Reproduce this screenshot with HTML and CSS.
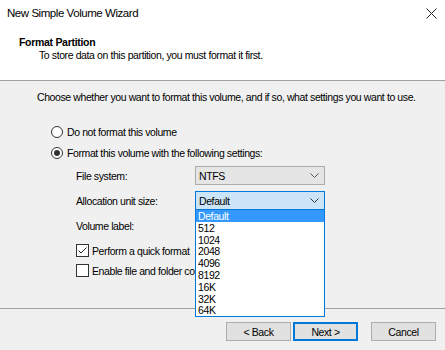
FILE: index.html
```html
<!DOCTYPE html>
<html lang="en">
<head>
  <meta charset="UTF-8" />
  <title>New Simple Volume Wizard</title>
  <link rel="stylesheet" href="styles.css">
</head>
<body>
  <div class="window">
    <div class="top">
      <div class="titlebar">
        <span class="title">New Simple Volume Wizard</span>
        <svg class="close" width="11" height="11" viewBox="0 0 11 11">
          <path d="M0.5 0.5 L10.5 10.5 M10.5 0.5 L0.5 10.5" stroke="#222" stroke-width="1" fill="none"/>
        </svg>
      </div>
      <div class="heading">
        <h1>Format Partition</h1>
        <p>To store data on this partition, you must format it first.</p>
      </div>
    </div>

    <div class="content">
      <p class="intro">Choose whether you want to format this volume, and if so, what settings you want to use.</p>

      <div class="option">
        <span class="radio"></span>
        <span>Do not format this volume</span>
      </div>
      <div class="option">
        <span class="radio checked"></span>
        <span>Format this volume with the following settings:</span>
      </div>

      <div class="settings">
        <div class="field">
          <span class="label">File system:</span>
          <div class="combo">
            <span>NTFS</span>
            <svg width="9" height="5" viewBox="0 0 9 5"><path d="M0.5 0.5 L4.5 4.5 L8.5 0.5" stroke="#555" fill="none"/></svg>
          </div>
        </div>
        <div class="field">
          <span class="label">Allocation unit size:</span>
          <div class="combo open">
            <span>Default</span>
            <svg width="9" height="5" viewBox="0 0 9 5"><path d="M0.5 0.5 L4.5 4.5 L8.5 0.5" stroke="#333" fill="none"/></svg>
            <ul class="dropdown">
              <li class="selected">Default</li>
              <li>512</li>
              <li>1024</li>
              <li>2048</li>
              <li>4096</li>
              <li>8192</li>
              <li>16K</li>
              <li>32K</li>
              <li>64K</li>
            </ul>
          </div>
        </div>
        <div class="field">
          <span class="label">Volume label:</span>
        </div>

        <div class="check-row">
          <span class="checkbox">
            <svg width="11" height="11" viewBox="0 0 11 11"><path d="M1.5 5.5 L4 8 L9.5 2.5" stroke="#222" fill="none"/></svg>
          </span>
          <span>Perform a quick format</span>
        </div>
        <div class="check-row">
          <span class="checkbox"></span>
          <span>Enable file and folder compression</span>
        </div>
      </div>
    </div>

    <div class="buttons">
      <button class="btn">&lt; Back</button>
      <button class="btn default">Next &gt;</button>
      <button class="btn cancel">Cancel</button>
    </div>
  </div>
</body>
</html>
```

FILE: styles.css
```css
* {
  margin: 0;
  padding: 0;
  box-sizing: border-box;
}

body {
  font-family: 'Liberation Sans', Arial, sans-serif;
  font-size: 10.5px;
  letter-spacing: -0.4px;
  color: #000;
  background: #f0f0f0;
}

.window {
  width: 445px;
  height: 350px;
  display: flex;
  flex-direction: column;
  overflow: hidden;
}

.top {
  background: #fff;
  height: 81px;
  border-bottom: 1px solid #a0a0a0;
}

.titlebar {
  height: 27px;
  display: flex;
  align-items: center;
  justify-content: space-between;
  padding: 0 8px 1px 7px;
}

.title {
  font-size: 11.5px;
  letter-spacing: -0.45px;
}

.heading {
  padding: 9px 0 0 19px;
}

.heading h1 {
  font-size: 10.5px;
  letter-spacing: -0.3px;
  font-weight: bold;
  line-height: 13px;
}

.heading p {
  padding-left: 20px;
  line-height: 13px;
  letter-spacing: -0.4px;
}

.content {
  flex: 1;
  padding: 10px 0 0 37px;
  border-bottom: 1px solid #a0a0a0;
}

.intro {
  line-height: 13px;
  white-space: nowrap;
  margin-bottom: 21px;
}

.option {
  display: flex;
  align-items: center;
  gap: 4px;
  height: 13px;
  margin: 0 0 8px 14px;
}

.radio {
  width: 12px;
  height: 12px;
  border: 1px solid #333;
  border-radius: 50%;
  background: #fff;
  display: flex;
  align-items: center;
  justify-content: center;
}

.radio.checked::after {
  content: "";
  width: 6px;
  height: 6px;
  border-radius: 50%;
  background: #333;
}

.settings {
  margin-top: -1px;
  padding-left: 39px;
}

.field {
  display: flex;
  align-items: center;
  height: 19px;
  margin-bottom: 6px;
}

.label {
  width: 119px;
}

.combo {
  position: relative;
  width: 130px;
  height: 19px;
  background: #e5e5e5;
  border: 1px solid #adadad;
  display: flex;
  align-items: center;
  justify-content: space-between;
  padding: 0 5px 0 3px;
}

.combo.open {
  background: #cce4f7;
  border-color: #0078d7;
}

.dropdown {
  position: absolute;
  top: 17px;
  left: -1px;
  width: 130px;
  list-style: none;
  background: #fff;
  border: 1px solid #0078d7;
  z-index: 10;
}

.dropdown li {
  height: 11.8px;
  line-height: 12px;
  padding-left: 2px;
}

.dropdown li.selected {
  background: #3399ff;
  color: #fff;
}

.check-row {
  display: flex;
  align-items: center;
  gap: 3px;
  height: 13px;
  margin-top: 9px;
}

.check-row + .check-row {
  margin-top: 7px;
}

.checkbox {
  width: 13px;
  height: 13px;
  border: 1px solid #333;
  background: #fff;
  display: flex;
  align-items: center;
  justify-content: center;
}

.buttons {
  height: 41px;
  display: flex;
  justify-content: flex-end;
  align-items: flex-start;
  padding: 13px 9px 0 0;
}

.btn {
  width: 65px;
  height: 19px;
  font-family: inherit;
  font-size: 10.5px;
  letter-spacing: -0.4px;
  color: #000;
  background: #e1e1e1;
  border: 1px solid #adadad;
}

.btn.default {
  border: 2px solid #0078d7;
  margin-left: 2px;
}

.btn.cancel {
  margin-left: 13px;
}
```
